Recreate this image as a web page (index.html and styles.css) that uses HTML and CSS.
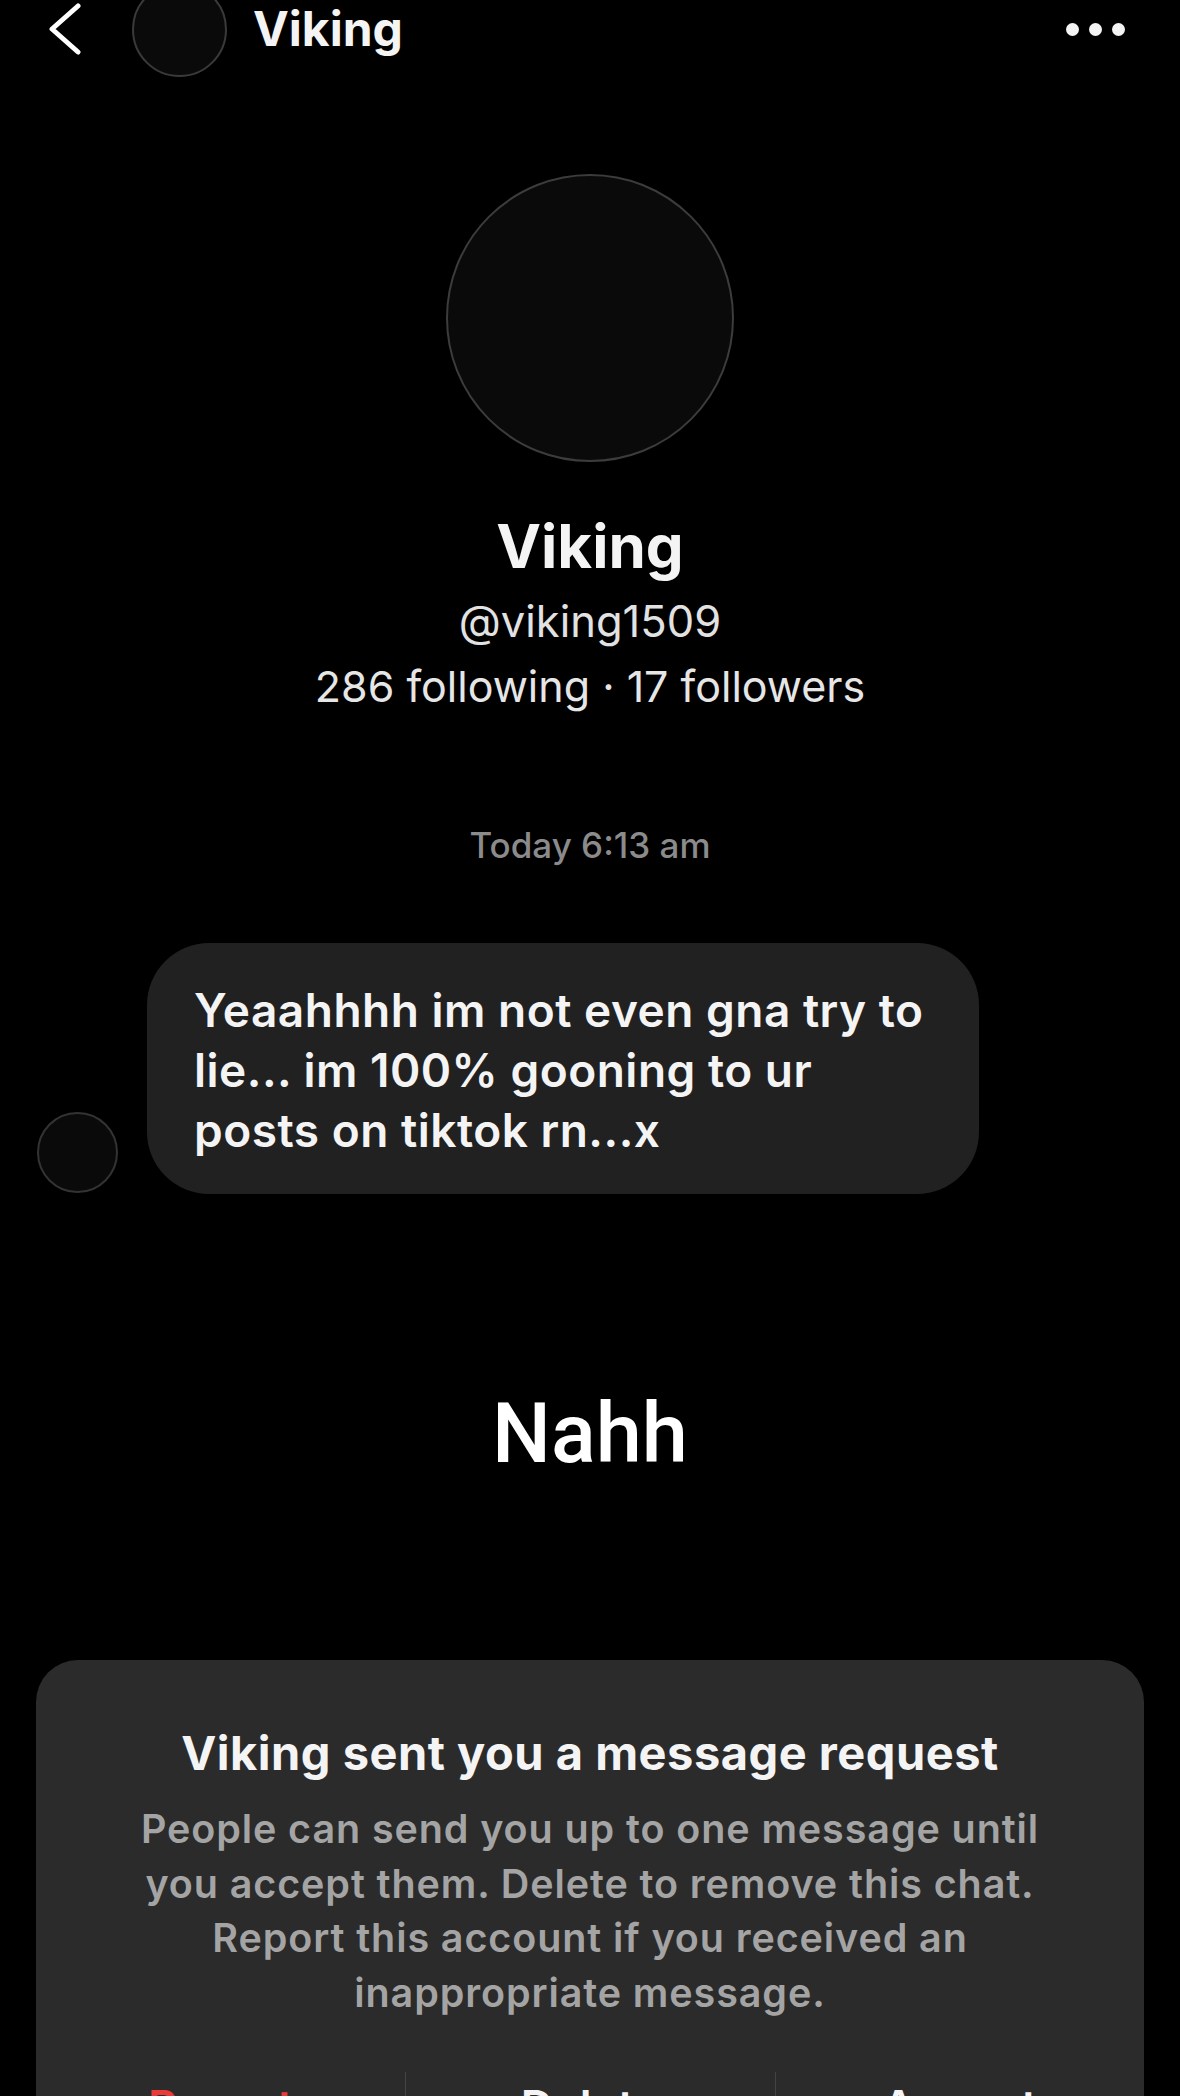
FILE: index.html
```html
<!doctype html>
<html lang="en">
<head>
  <meta charset="UTF-8">
  <title>Viking</title>
  <link rel="stylesheet" href="styles.css">
</head>
<body>

<div class="topbar">
  <svg class="back" width="34" height="52" viewBox="0 0 34 52">
    <path d="M30 3 L4 26 L30 49" fill="none" stroke="#fff" stroke-width="5" stroke-linecap="round" stroke-linejoin="round"/>
  </svg>
  <div class="avatar small"></div>
  <span class="topname">Viking</span>
  <div class="more">
    <span></span><span></span><span></span>
  </div>
</div>

<div class="profile">
  <div class="avatar big"></div>
  <h1>Viking</h1>
  <div class="handle">@viking1509</div>
  <div class="counts">286 following · 17 followers</div>
</div>

<div class="stamp">Today 6:13 am</div>

<div class="msg">
  <div class="avatar tiny"></div>
  <div class="bubble">Yeaahhhh im not even gna try to lie... im 100% gooning to ur posts on tiktok rn...x</div>
</div>

<div class="caption">Nahh</div>

<div class="request">
  <h2>Viking sent you a message request</h2>
  <p>People can send you up to one message until you accept them. Delete to remove this chat. Report this account if you received an inappropriate message.</p>
  <div class="actions">
    <a class="report">Report</a>
    <a>Delete</a>
    <a>Accept</a>
  </div>
</div>

</body>
</html>
```

FILE: styles.css
```css
body {
  margin: 0;
  background: #000;
  color: #f2f2f2;
  font-family: 'Inter', 'Liberation Sans', sans-serif;
  width: 1180px;
  overflow: hidden;
}

.topbar {
  display: flex;
  align-items: center;
  height: 58px;
  padding: 0 55px 0 48px;
}

.back {
  display: block;
  flex: none;
}

.avatar {
  box-sizing: border-box;
  border-radius: 50%;
  border: 2px solid #3a3a3a;
  background: #0a0a0a;
  flex: none;
}

.avatar.small {
  width: 95px;
  height: 95px;
  margin-left: 50px;
}

.topname {
  font-size: 48px;
  font-weight: 700;
  line-height: 58px;
  margin-left: 26px;
  color: #f4f4f4;
}

.more {
  margin-left: auto;
  display: flex;
  gap: 10px;
}

.more span {
  width: 13px;
  height: 13px;
  border-radius: 50%;
  background: #f4f4f4;
}

.profile {
  display: flex;
  flex-direction: column;
  align-items: center;
  text-align: center;
}

.avatar.big {
  width: 288px;
  height: 288px;
  margin-top: 116px;
  border-color: #3c3c3c;
}

.profile h1 {
  margin: 48px 0 0;
  font-size: 60px;
  line-height: 72px;
  font-weight: 700;
  color: #f4f4f4;
}

.handle {
  margin-top: 12px;
  font-size: 43.5px;
  line-height: 54px;
  color: #e2e2e2;
}

.counts {
  margin-top: 11px;
  font-size: 43px;
  line-height: 54px;
  color: #e6e6e6;
}

.stamp {
  margin-top: 111px;
  text-align: center;
  font-size: 35px;
  line-height: 42px;
  font-weight: 500;
  color: #8b8b8b;
}

.msg {
  margin-top: 77px;
  display: flex;
  align-items: flex-end;
  padding-left: 37px;
  gap: 29px;
}

.avatar.tiny {
  width: 81px;
  height: 81px;
  border-color: #333;
  margin-bottom: 1px;
}

.bubble {
  box-sizing: border-box;
  width: 832px;
  padding: 37px 35px 34px 47px;
  background: #212121;
  border-radius: 62px;
  font-size: 46px;
  line-height: 60px;
  font-weight: 600;
  letter-spacing: 0.5px;
  color: #f4f4f4;
}

.caption {
  margin-top: 190px;
  text-align: center;
  font-family: 'Roboto', 'Liberation Sans', sans-serif;
  font-size: 83px;
  line-height: 100px;
  font-weight: 500;
  color: #fff;
}

.request {
  margin: 176px 36px 0;
  padding: 65px 80px 0;
  background: #2b2b2b;
  border-radius: 42px;
  text-align: center;
  height: 600px;
}

.request h2 {
  margin: 0;
  font-size: 47px;
  line-height: 56px;
  font-weight: 700;
  letter-spacing: 0.5px;
  color: #f4f4f4;
}

.request p {
  margin: 21px 0 0;
  font-size: 39.5px;
  line-height: 54.5px;
  font-weight: 600;
  letter-spacing: 0.9px;
  color: #a4a4a4;
}

.actions {
  display: grid;
  grid-template-columns: 1fr 1fr 1fr;
  margin: 52px -80px 0;
}

.actions a {
  padding-top: 5px;
  font-size: 45px;
  line-height: 60px;
  font-weight: 600;
  color: #f4f4f4;
  border-left: 1px solid #444;
}

.actions a:first-child {
  border-left: none;
}

.actions a.report {
  color: #ea3b3b;
}
```
